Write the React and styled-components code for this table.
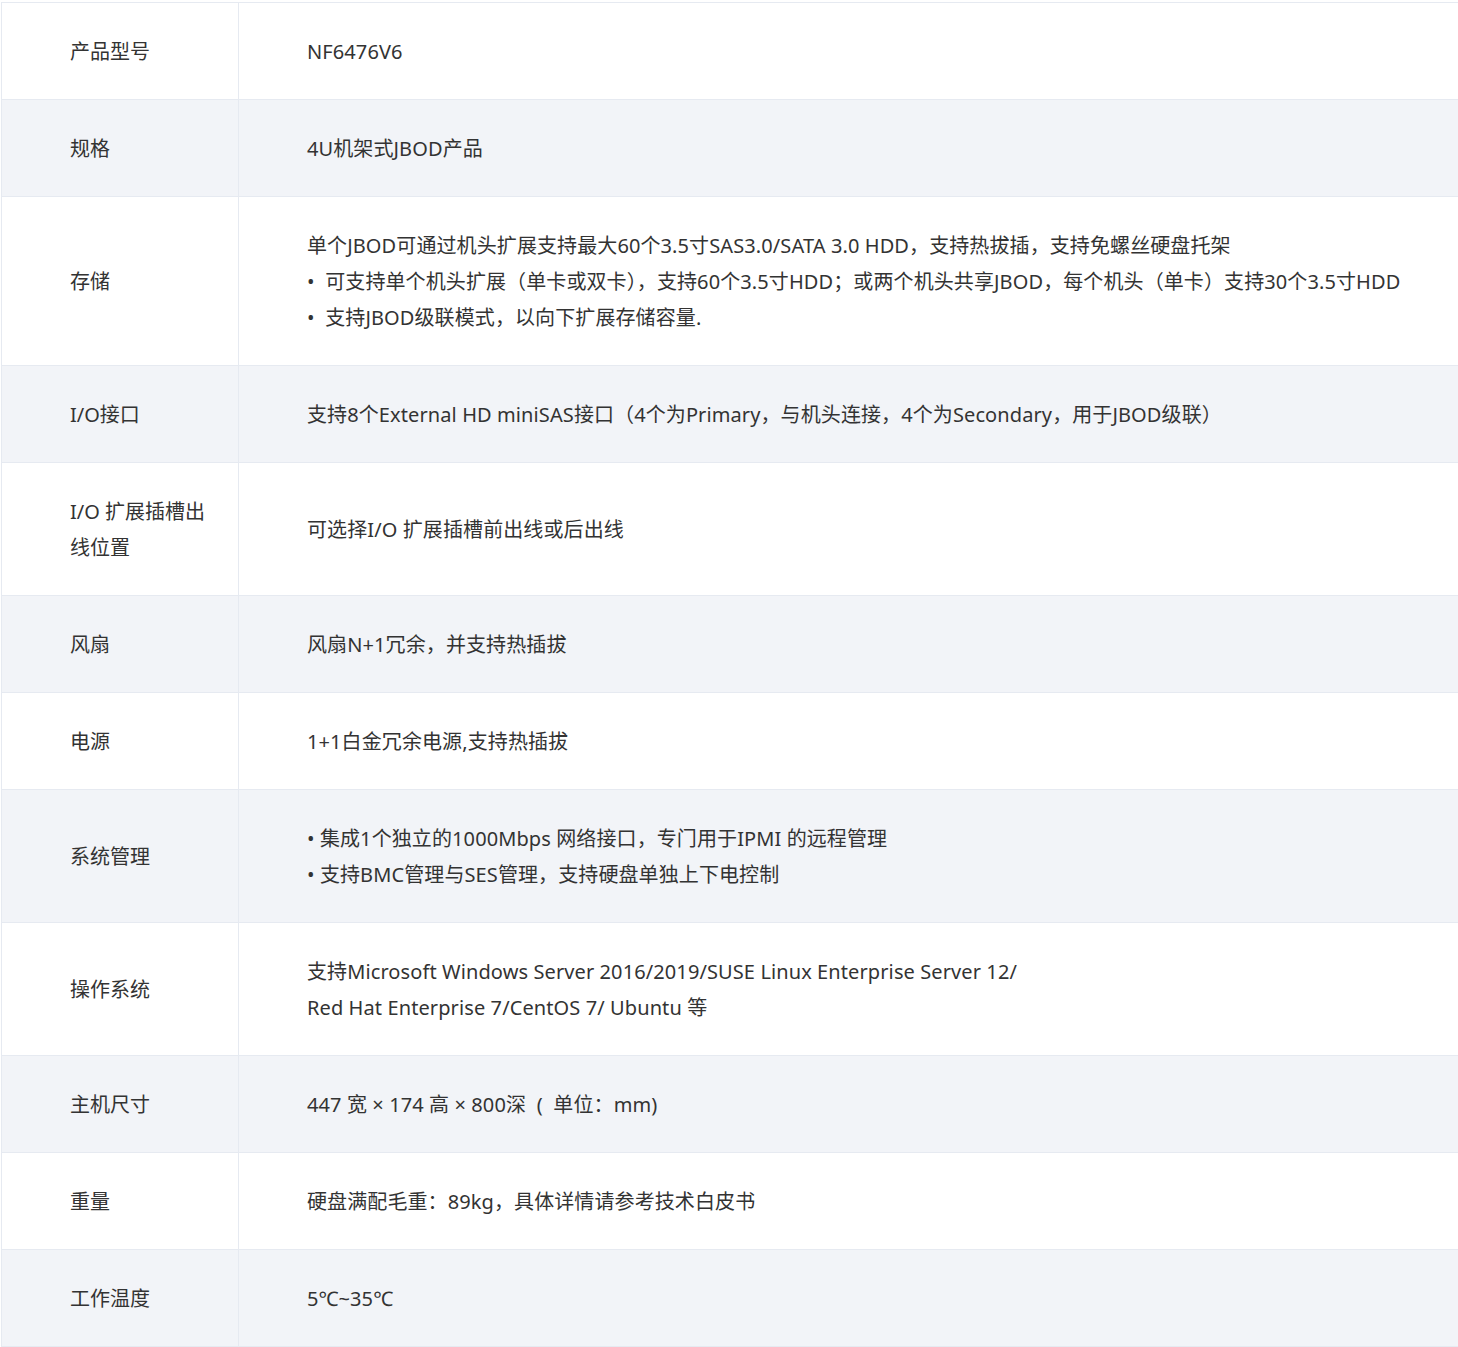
import React from "react";
import styled, { createGlobalStyle } from "styled-components";

const GlobalStyle = createGlobalStyle`
    html, body {
        margin: 0;
        padding: 0;
        background: #ffffff;
        overflow: hidden;
    }
    body {
        font-family: "Noto Sans", "Noto Sans CJK SC", sans-serif;
        color: #333333;
    }
`;

const Page = styled.div`
    padding: 2px 0 0 1px;
`;

const SpecTable = styled.table`
    width: 1460px;
    border-collapse: collapse;
    table-layout: fixed;
    font-size: 20px;
    line-height: 36px;
`;

const Row = styled.tr`
    background: ${props => (props.$shaded ? "#f2f4f8" : "#ffffff")};
`;

const LabelCell = styled.td`
    width: 237px;
    box-sizing: border-box;
    padding: 31px 20px 29px 68px;
    border: 1px solid #e6eaf1;
    vertical-align: middle;
`;

const ValueCell = styled.td`
    padding: 31px 0 29px 68px;
    border: 1px solid #e6eaf1;
    vertical-align: middle;
`;

const Line = styled.div`
    white-space: pre;
    letter-spacing: 0.1px;
`;

const specs = [
    { label: "产品型号", value: ["NF6476V6"] },
    { label: "规格", value: ["4U机架式JBOD产品"] },
    {
        label: "存储",
        value: [
            "单个JBOD可通过机头扩展支持最大60个3.5寸SAS3.0/SATA 3.0 HDD，支持热拔插，支持免螺丝硬盘托架",
            "•  可支持单个机头扩展（单卡或双卡），支持60个3.5寸HDD；或两个机头共享JBOD，每个机头（单卡）支持30个3.5寸HDD",
            "•  支持JBOD级联模式，以向下扩展存储容量."
        ]
    },
    { label: "I/O接口", value: ["支持8个External HD miniSAS接口（4个为Primary，与机头连接，4个为Secondary，用于JBOD级联）"] },
    { label: "I/O 扩展插槽出线位置", value: ["可选择I/O 扩展插槽前出线或后出线"] },
    { label: "风扇", value: ["风扇N+1冗余，并支持热插拔"] },
    { label: "电源", value: ["1+1白金冗余电源,支持热插拔"] },
    {
        label: "系统管理",
        value: [
            "• 集成1个独立的1000Mbps 网络接口，专门用于IPMI 的远程管理",
            "• 支持BMC管理与SES管理，支持硬盘单独上下电控制"
        ]
    },
    {
        label: "操作系统",
        value: [
            "支持Microsoft Windows Server 2016/2019/SUSE Linux Enterprise Server 12/",
            "Red Hat Enterprise 7/CentOS 7/ Ubuntu 等"
        ]
    },
    { label: "主机尺寸", value: ["447 宽 × 174 高 × 800深  (  单位：mm)"] },
    { label: "重量", value: ["硬盘满配毛重：89kg，具体详情请参考技术白皮书"] },
    { label: "工作温度", value: ["5℃~35℃"] }
];

export default function App() {
    return (
        <Page>
            <GlobalStyle />
            <SpecTable>
                <tbody>
                    {specs.map((spec, i) => (
                        <Row key={spec.label} $shaded={i % 2 === 1}>
                            <LabelCell>{spec.label}</LabelCell>
                            <ValueCell>
                                {spec.value.map(text => (
                                    <Line key={text}>{text}</Line>
                                ))}
                            </ValueCell>
                        </Row>
                    ))}
                </tbody>
            </SpecTable>
        </Page>
    );
}
